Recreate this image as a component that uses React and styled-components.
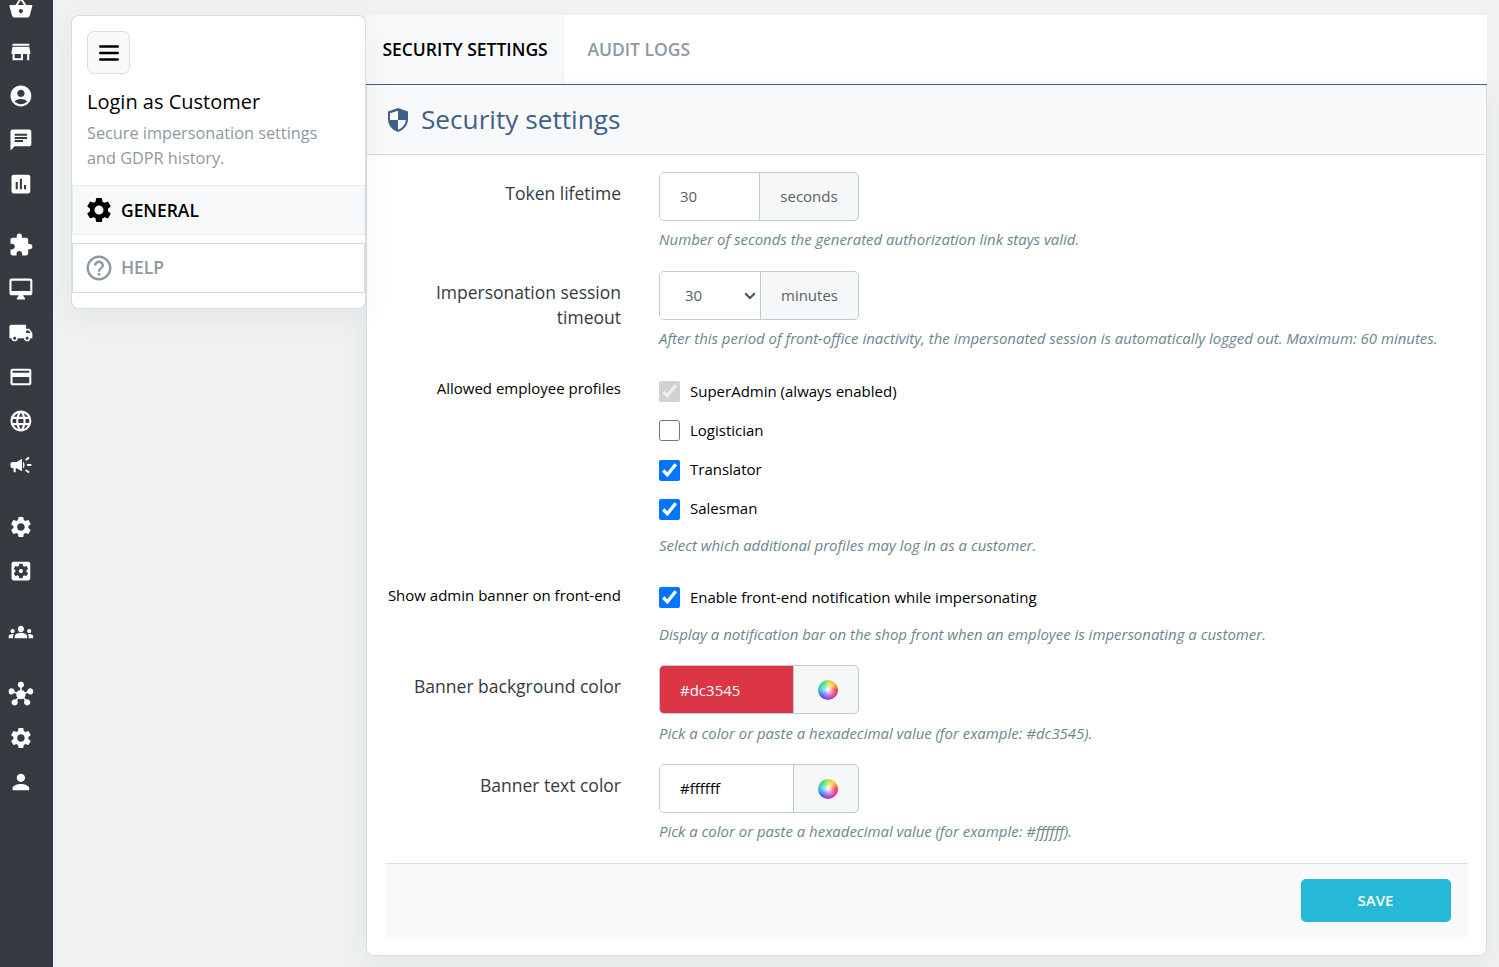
import React from "react"
import styled, { createGlobalStyle } from "styled-components"
import {
  MdAccountCircle,
  MdAssessment,
  MdCampaign,
  MdChat,
  MdExtension,
  MdGroups,
  MdHelpOutline,
  MdHub,
  MdLanguage,
  MdLocalShipping,
  MdOutlineDesktopMac,
  MdPayment,
  MdPerson,
  MdSettings,
  MdSettingsApplications,
  MdShoppingBasket,
  MdStore,
} from "react-icons/md"

const GlobalStyle = createGlobalStyle`
  * {
    box-sizing: border-box;
  }

  body {
    margin: 0;
    background: #eff1f2;
    font-family: "Open Sans", "Noto Sans", sans-serif;
    font-size: 15px;
    color: #000;
    overflow: hidden;
  }

  input,
  select,
  button {
    margin: 0;
    font-family: inherit;
  }
`

const Page = styled.div`
  display: flex;
  align-items: flex-start;
  height: 967px;
  overflow: hidden;
`

const NavBar = styled.nav`
  flex: none;
  width: 53px;
  height: 967px;
  overflow: hidden;
  background: #363a41;
`

const NavGroup = styled.div`
  margin-bottom: 17.6px;

  &:first-child {
    margin-top: -14px;
  }
`

const NavLink = styled.a`
  display: flex;
  align-items: center;
  height: 44px;
  padding-left: 8px;
  color: #fff;
  font-size: 25px;

  & > svg {
    transform: translate(0.4px, -0.5px);
  }
`

const SideCard = styled.aside`
  position: relative;
  z-index: 1;
  flex: none;
  width: 295px;
  height: 294px;
  margin: 15px 0 0 18px;
  border: 1px solid #d8dde4;
  border-radius: 8px;
  background: #fff;
  box-shadow: 0 8px 30px rgba(40, 50, 60, 0.06);
`

const MenuButton = styled.button`
  display: flex;
  align-items: center;
  justify-content: center;
  width: 43px;
  height: 43px;
  margin: 15px 0 0 15px;
  padding: 0;
  border: 1px solid #d8dde4;
  border-radius: 7px;
  background: #f8f9fb;
  color: #000;
`

const CardTitle = styled.h2`
  margin: 14px 15px 0;
  font-size: 20px;
  font-weight: 400;
  line-height: 28px;
`

const CardText = styled.p`
  width: 240px;
  margin: 5px 15px 0;
  color: #8d99a5;
  font-size: 16.27px;
  line-height: 25px;
`

const SideLink = styled.a`
  display: flex;
  align-items: center;
  gap: 7px;
  height: 50px;
  margin-top: ${props => props.$top}px;
  padding-left: 11px;
  padding-bottom: ${props => (props.$active ? 0 : 2)}px;
  border: 1px solid ${props => (props.$active ? "#e9edf1" : "#d5d9e2")};
  background: ${props => (props.$active ? "#f8f9fa" : "#fff")};
  color: ${props => (props.$active ? "#000" : "#8d99a5")};
  font-size: 17.5px;
  font-weight: 600;
  letter-spacing: -0.05px;

  & > svg {
    margin-top: ${props => (props.$active ? 0 : 2)}px;
  }
`

const Content = styled.main`
  flex: none;
  width: 1121px;
  margin-top: 15px;
`

const Tabs = styled.div`
  display: flex;
  height: 70px;
  border-bottom: 1px solid #3f6188;
  background: #fff;
`

const Tab = styled.a`
  display: flex;
  align-items: center;
  width: ${props => (props.$active ? 198 : 150)}px;
  padding-left: ${props => (props.$active ? 16.4 : 23.4)}px;
  padding-bottom: 2px;
  border-right: ${props => (props.$active ? "1px solid #edf0f3" : "none")};
  background: ${props => (props.$active ? "#f8f9fb" : "transparent")};
  color: ${props => (props.$active ? "#000" : "#8d99a5")};
  font-size: 17.5px;
  font-weight: 600;
  white-space: nowrap;
`

const Panel = styled.section`
  height: 871px;
  border: 1px solid #d8dde4;
  border-top: 0;
  border-radius: 0 0 8px 8px;
  background: #fff;
  box-shadow: 0 8px 30px rgba(40, 50, 60, 0.06);
`

const PanelHeading = styled.h1`
  display: flex;
  align-items: center;
  gap: 11px;
  height: 70px;
  margin: 0;
  padding: 0 0 2px 19px;
  border-bottom: 1px solid #d8dde4;
  background: #f8f9fb;
  color: #3f6188;
  font-size: 26.2px;
  font-weight: 400;

  & > svg {
    margin-top: 2px;
  }
`

const Form = styled.form`
  padding-top: 17px;
`

const Row = styled.div`
  display: grid;
  grid-template-columns: 236px 1fr;
  column-gap: 38px;
  height: ${props => props.$height || 99}px;
  padding-left: 18px;
`

const Label = styled.label`
  padding-top: ${props => (props.$small ? 6 : 9)}px;
  color: ${props => (props.$small ? "#000" : "#363a41")};
  font-size: ${props => (props.$small ? 15 : 17.5)}px;
  line-height: 25px;
  text-align: right;
`

const InputGroup = styled.div`
  display: flex;
  width: 200px;
  height: 49px;
  overflow: hidden;
  border: 1px solid #bbcdd2;
  border-radius: 5px;
  background: #f5f7f9;
`

const TextInput = styled.input`
  width: ${props => props.$width}px;
  padding: 0 20px ${props => (props.$low ? 0 : 1.4)}px;
  border: 0;
  border-right: 1px solid #bbcdd2;
  border-radius: 0;
  outline: 0;
  background: ${props => props.$background || "#fff"};
  color: ${props => props.$color || "#5b6065"};
  font-size: 15px;
`

const SelectBox = styled.div`
  position: relative;
  display: flex;
  width: 101px;
  border-right: 1px solid #bbcdd2;
  background: #fff;
  color: #4b5055;

  & > svg {
    position: absolute;
    top: 20px;
    right: 4px;
    pointer-events: none;
  }
`

const Select = styled.select`
  appearance: none;
  width: 100%;
  padding: 0 0 2px 25px;
  border: 0;
  border-radius: 0;
  background: transparent;
  color: #5b6065;
  font-size: 15px;
`

const Addon = styled.span`
  flex: 1;
  display: flex;
  align-items: center;
  justify-content: center;
  padding-left: ${props => props.$shift || 0}px;
  padding-bottom: ${props => (props.$shift ? 0 : 2)}px;
  color: #5b6065;
`

const Hint = styled.p`
  margin: ${props => props.$top || 7.1}px 0 0;
  color: #6c868e;
  font-size: 14.96px;
  font-style: italic;
  line-height: 22px;
  white-space: nowrap;
`

const Checks = styled.div`
  padding-top: ${props => props.$top || 2}px;
`

const Check = styled.label`
  display: flex;
  align-items: center;
  gap: 10px;
  height: 39.1px;
  padding-bottom: 2px;

  & > input {
    width: 21px;
    height: 21px;
    margin-top: 2.6px;
  }
`

const Footer = styled.footer`
  display: flex;
  justify-content: flex-end;
  height: 74px;
  margin: 0 18px;
  padding: 15px 17px 0 0;
  border-top: 1px solid #d8dde4;
  background: #f8f9fb;
`

const SaveButton = styled.button`
  width: 150px;
  height: 43px;
  padding: 0 1px 1px 0;
  border: 0;
  border-radius: 5px;
  background: #25b9d7;
  color: #fff;
  font-size: 15px;
  font-weight: 600;
`

const Wheel = styled.span`
  width: 20px;
  height: 20px;
  border-radius: 50%;
  background:
    radial-gradient(circle at 50% 50%, #fff 0%, rgba(255, 255, 255, 0.45) 30%, transparent 62%),
    conic-gradient(#b5e63a, #ffc23e 45deg, #f5363f 90deg, #e92fb4 135deg, #9440e0 180deg, #4458e6 225deg, #2fc4ee 275deg, #3fdb74 325deg, #b5e63a);
`

const navGroups = [
  [MdShoppingBasket, MdStore, MdAccountCircle, MdChat, MdAssessment],
  [MdExtension, MdOutlineDesktopMac, MdLocalShipping, MdPayment, MdLanguage, MdCampaign],
  [MdSettings, MdSettingsApplications],
  [MdGroups],
  [MdHub, MdSettings, MdPerson],
]

const profiles = [
  { name: "SuperAdmin (always enabled)", checked: true, disabled: true },
  { name: "Logistician", checked: false },
  { name: "Translator", checked: true },
  { name: "Salesman", checked: true },
]

const BarsIcon = () => (
  <svg width="20" height="16" viewBox="0 0 20 16" stroke="currentColor" strokeLinecap="round">
    <path d="M1.3 1.5H18.7M1.3 8H18.7M1.3 14.5H18.7" strokeWidth="2.6" />
  </svg>
)

const ArrowIcon = () => (
  <svg width="12" height="8" viewBox="0 0 12 8" fill="none" stroke="currentColor">
    <path d="M1.2 1.2 6 6 10.8 1.2" strokeWidth="2" />
  </svg>
)

const ShieldIcon = () => (
  <svg width="24" height="26" viewBox="0 0 24 26" fill="none">
    <path d="M12 1 22 4.5V12c0 6-4 11-10 13C6 23 2 18 2 12V4.5Z" fill="#3f6188" />
    <path d="M12 3.7V13H4V6.2Z M12 13h7.8c-.5 4.5-3.3 8.2-7.8 9.8Z" fill="#f8f9fb" />
  </svg>
)

const ColorField = ({ label, value, background, color, low }) => (
  <Row>
    <Label>{label}</Label>
    <div>
      <InputGroup>
        <TextInput
          $width={134}
          $background={background}
          $color={color}
          $low={low}
          defaultValue={value}
        />
        <Addon $shift={4}>
          <Wheel />
        </Addon>
      </InputGroup>
      <Hint $top={low ? 8 : 7.1}>
        Pick a color or paste a hexadecimal value (for example: {value}).
      </Hint>
    </div>
  </Row>
)

const SettingsForm = () => (
  <Form>
    <Row>
      <Label>Token lifetime</Label>
      <div>
        <InputGroup>
          <TextInput $width={100} defaultValue="30" />
          <Addon>seconds</Addon>
        </InputGroup>
        <Hint>Number of seconds the generated authorization link stays valid.</Hint>
      </div>
    </Row>
    <Row>
      <Label>Impersonation session timeout</Label>
      <div>
        <InputGroup>
          <SelectBox>
            <Select defaultValue="30">
              <option>30</option>
            </Select>
            <ArrowIcon />
          </SelectBox>
          <Addon>minutes</Addon>
        </InputGroup>
        <Hint>
          After this period of front-office inactivity, the impersonated session is automatically
          logged out. Maximum: 60 minutes.
        </Hint>
      </div>
    </Row>
    <Row $height={207}>
      <Label $small>Allowed employee profiles</Label>
      <Checks>
        {profiles.map(profile => (
          <Check key={profile.name}>
            <input type="checkbox" defaultChecked={profile.checked} disabled={profile.disabled} />
            {profile.name}
          </Check>
        ))}
        <Hint $top={5.8}>Select which additional profiles may log in as a customer.</Hint>
      </Checks>
    </Row>
    <Row $height={88}>
      <Label $small>Show admin banner on front-end</Label>
      <Checks $top={1}>
        <Check>
          <input type="checkbox" defaultChecked />
          Enable front-end notification while impersonating
        </Check>
        <Hint $top={5.8}>
          Display a notification bar on the shop front when an employee is impersonating a customer.
        </Hint>
      </Checks>
    </Row>
    <ColorField
      label="Banner background color"
      value="#dc3545"
      background="#dc3545"
      color="#fff"
      low
    />
    <ColorField label="Banner text color" value="#ffffff" background="#fff" color="#000" />
  </Form>
)

const App = () => {
  return (
    <Page>
      <GlobalStyle />
      <NavBar>
        {navGroups.map((icons, group) => (
          <NavGroup key={group}>
            {icons.map((Icon, index) => (
              <NavLink key={index}>
                <Icon />
              </NavLink>
            ))}
          </NavGroup>
        ))}
      </NavBar>
      <SideCard>
        <MenuButton type="button">
          <BarsIcon />
        </MenuButton>
        <CardTitle>Login as Customer</CardTitle>
        <CardText>Secure impersonation settings and GDPR history.</CardText>
        <SideLink $active $top={14}>
          <MdSettings size={30} />
          GENERAL
        </SideLink>
        <SideLink $top={8}>
          <MdHelpOutline size={30} />
          HELP
        </SideLink>
      </SideCard>
      <Content>
        <Tabs>
          <Tab $active>SECURITY SETTINGS</Tab>
          <Tab>AUDIT LOGS</Tab>
        </Tabs>
        <Panel>
          <PanelHeading>
            <ShieldIcon />
            Security settings
          </PanelHeading>
          <SettingsForm />
          <Footer>
            <SaveButton type="button">SAVE</SaveButton>
          </Footer>
        </Panel>
      </Content>
    </Page>
  )
}

export default App
